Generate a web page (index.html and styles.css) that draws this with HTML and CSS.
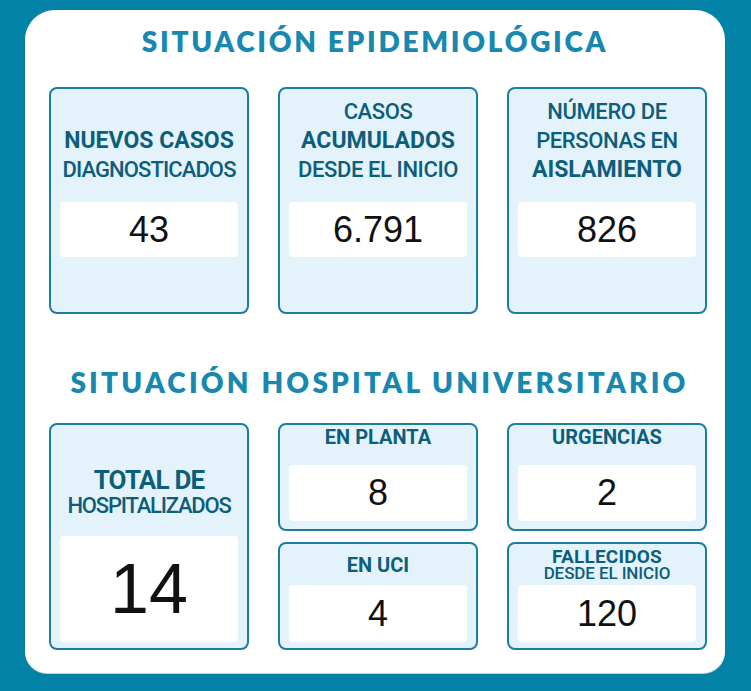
FILE: index.html
```html
<!DOCTYPE html>
<html lang="es">
<head>
<meta charset="utf-8">
<title>Situación epidemiológica</title>
<link rel="stylesheet" href="styles.css">
</head>
<body>
<main class="panel">
  <h1 class="title title-epi">SITUACIÓN EPIDEMIOLÓGICA</h1>
  <section class="grid-epi">
    <div class="card card-tall">
      <div class="label">
        <div class="ln bold">NUEVOS CASOS</div>
        <div class="ln med tight">DIAGNOSTICADOS</div>
      </div>
      <div class="value">43</div>
    </div>
    <div class="card card-tall">
      <div class="label">
        <div class="ln med">CASOS</div>
        <div class="ln bold">ACUMULADOS</div>
        <div class="ln med">DESDE EL INICIO</div>
      </div>
      <div class="value">6.791</div>
    </div>
    <div class="card card-tall">
      <div class="label">
        <div class="ln med">NÚMERO DE</div>
        <div class="ln med">PERSONAS EN</div>
        <div class="ln bold">AISLAMIENTO</div>
      </div>
      <div class="value">826</div>
    </div>
  </section>

  <h2 class="title title-hosp">SITUACIÓN HOSPITAL UNIVERSITARIO</h2>
  <section class="grid-hosp">
    <div class="card card-total">
      <div class="label label-total">
        <div class="total-main">TOTAL DE</div>
        <div class="total-sub">HOSPITALIZADOS</div>
      </div>
      <div class="value value-big">14</div>
    </div>
    <div class="card card-small">
      <div class="slabel slabel-top"><div class="sl">EN PLANTA</div></div>
      <div class="value value-small">8</div>
    </div>
    <div class="card card-small">
      <div class="slabel slabel-top"><div class="sl">URGENCIAS</div></div>
      <div class="value value-small">2</div>
    </div>
    <div class="card card-small">
      <div class="slabel slabel-bot"><div class="sl">EN UCI</div></div>
      <div class="value value-small2">4</div>
    </div>
    <div class="card card-small">
      <div class="slabel slabel-bot">
        <div class="fl">FALLECIDOS</div>
        <div class="fl2">DESDE EL INICIO</div>
      </div>
      <div class="value value-small2">120</div>
    </div>
  </section>
</main>
</body>
</html>
```

FILE: styles.css
```css
* { box-sizing: border-box; }

html, body {
  margin: 0;
  padding: 0;
}

body {
  background: #0382a7;
  width: 751px;
  height: 691px;
  overflow: hidden;
  font-family: Roboto, "Liberation Sans", sans-serif;
}

.panel {
  margin: 10px 0 0 25px;
  width: 700px;
  height: 663px;
  background: #ffffff;
  border-radius: 30px 30px 22px 22px;
  padding: 14px 18px 23px 24px;
  box-shadow: 0 1px 0 #c9d3d8;
}

.title {
  margin: 0;
  font-family: Lato, "Open Sans", sans-serif;
  font-weight: 800;
  font-size: 28px;
  line-height: 34px;
  color: #1888ae;
  text-align: center;
  white-space: nowrap;
}

.title-epi {
  letter-spacing: 2.7px;
  margin-left: -6px;
}

.title-hosp {
  letter-spacing: 3.2px;
  margin-top: 51px;
  margin-left: 3px;
}

.grid-epi,
.grid-hosp {
  display: grid;
  grid-template-columns: 200px 200px 200px;
  column-gap: 29px;
}

.grid-epi {
  margin-top: 29px;
}

.grid-hosp {
  margin-top: 24px;
  grid-template-rows: 108px 108px;
  row-gap: 11px;
}

.card {
  background: #e4f3fb;
  border: 2px solid #1b7ea0;
  border-radius: 8px;
  color: #0d5e7a;
  text-align: center;
  display: flex;
  flex-direction: column;
}

.card-tall {
  height: 227px;
}

.label {
  height: 95px;
  display: flex;
  flex-direction: column;
  justify-content: flex-end;
}

.ln {
  line-height: 29px;
  white-space: nowrap;
}

.bold { font-weight: 700; font-size: 23px; }
.med { font-weight: 500; font-size: 22px; letter-spacing: -0.4px; }
.med.tight { letter-spacing: -0.9px; }

.value {
  margin: 18px 9px 0;
  height: 55px;
  background: #ffffff;
  border-radius: 4px;
  display: flex;
  align-items: center;
  justify-content: center;
  font-family: "Liberation Sans", Arial, sans-serif;
  font-size: 36px;
  color: #111111;
}

.card-total {
  grid-row: 1 / span 2;
  grid-column: 1;
}

.label-total {
  height: 92px;
}

.total-main {
  font-weight: 700;
  font-size: 26px;
  line-height: 26px;
  letter-spacing: -0.8px;
  margin-bottom: 2px;
  white-space: nowrap;
}

.total-sub {
  font-weight: 500;
  font-size: 22px;
  line-height: 22px;
  letter-spacing: -1.2px;
  white-space: nowrap;
}

.value-big {
  margin-top: 19px;
  height: 106px;
  font-size: 70px;
}

.slabel {
  display: flex;
  flex-direction: column;
  white-space: nowrap;
}

.slabel-top {
  height: 40px;
  justify-content: flex-start;
}

.slabel-bot {
  height: 41px;
  justify-content: center;
}

.sl {
  font-weight: 700;
  font-size: 20px;
  line-height: 24px;
}

.fl {
  font-weight: 700;
  font-size: 19px;
  line-height: 16px;
  letter-spacing: 0.2px;
}

.fl2 {
  font-weight: 500;
  font-size: 17px;
  line-height: 16px;
  letter-spacing: -0.1px;
}

.value-small {
  margin-top: 0;
  height: 56px;
}

.value-small2 {
  margin-top: 0;
  height: 57px;
}
```
